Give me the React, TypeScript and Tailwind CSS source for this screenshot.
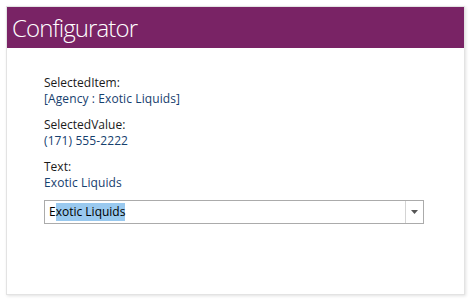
import React from "react";

export default function App() {
  return (
    <div className="w-[470px] h-[300px] bg-white p-[6px]" style={{ fontFamily: '"Open Sans", "Noto Sans", sans-serif' }}>
      <div className="w-[459px] h-[289px] border border-[#e3e3e3] shadow-[1px_1px_3px_rgba(0,0,0,0.12)] bg-white flex flex-col">
        <div className="h-[41px] bg-[#792365] flex items-center pl-[5px]">
          <span className="text-white text-[24px] font-light leading-none tracking-[-0.9px]">Configurator</span>
        </div>
        <div className="pl-[37px] pr-[40px] pt-[27px] text-[12px] leading-[16px]">
          <div className="text-[#1a1a1a]">SelectedItem:</div>
          <div className="text-[#16406e] tracking-[0.1px]">[Agency : Exotic Liquids]</div>
          <div className="mt-[10px] text-[#1a1a1a]">SelectedValue:</div>
          <div className="text-[#16406e] tracking-[0.1px]">(171) 555-2222</div>
          <div className="mt-[10px] text-[#1a1a1a]">Text:</div>
          <div className="text-[#16406e] tracking-[0.1px]">Exotic Liquids</div>
          <div className="mt-[9px] h-[24px] border border-[#ababab] flex">
            <div className="flex-1 flex items-center pl-[4px] text-black">
              <span>E</span>
              <span className="bg-[#99c9ef] leading-[18px]">xotic Liquids</span>
            </div>
            <div className="w-[18px] border-l border-[#d4d4d4] flex items-center justify-center">
              <svg width="7" height="4" viewBox="0 0 7 4"><path d="M0 0H7L3.5 4Z" fill="#555" /></svg>
            </div>
          </div>
        </div>
      </div>
    </div>
  );
}
